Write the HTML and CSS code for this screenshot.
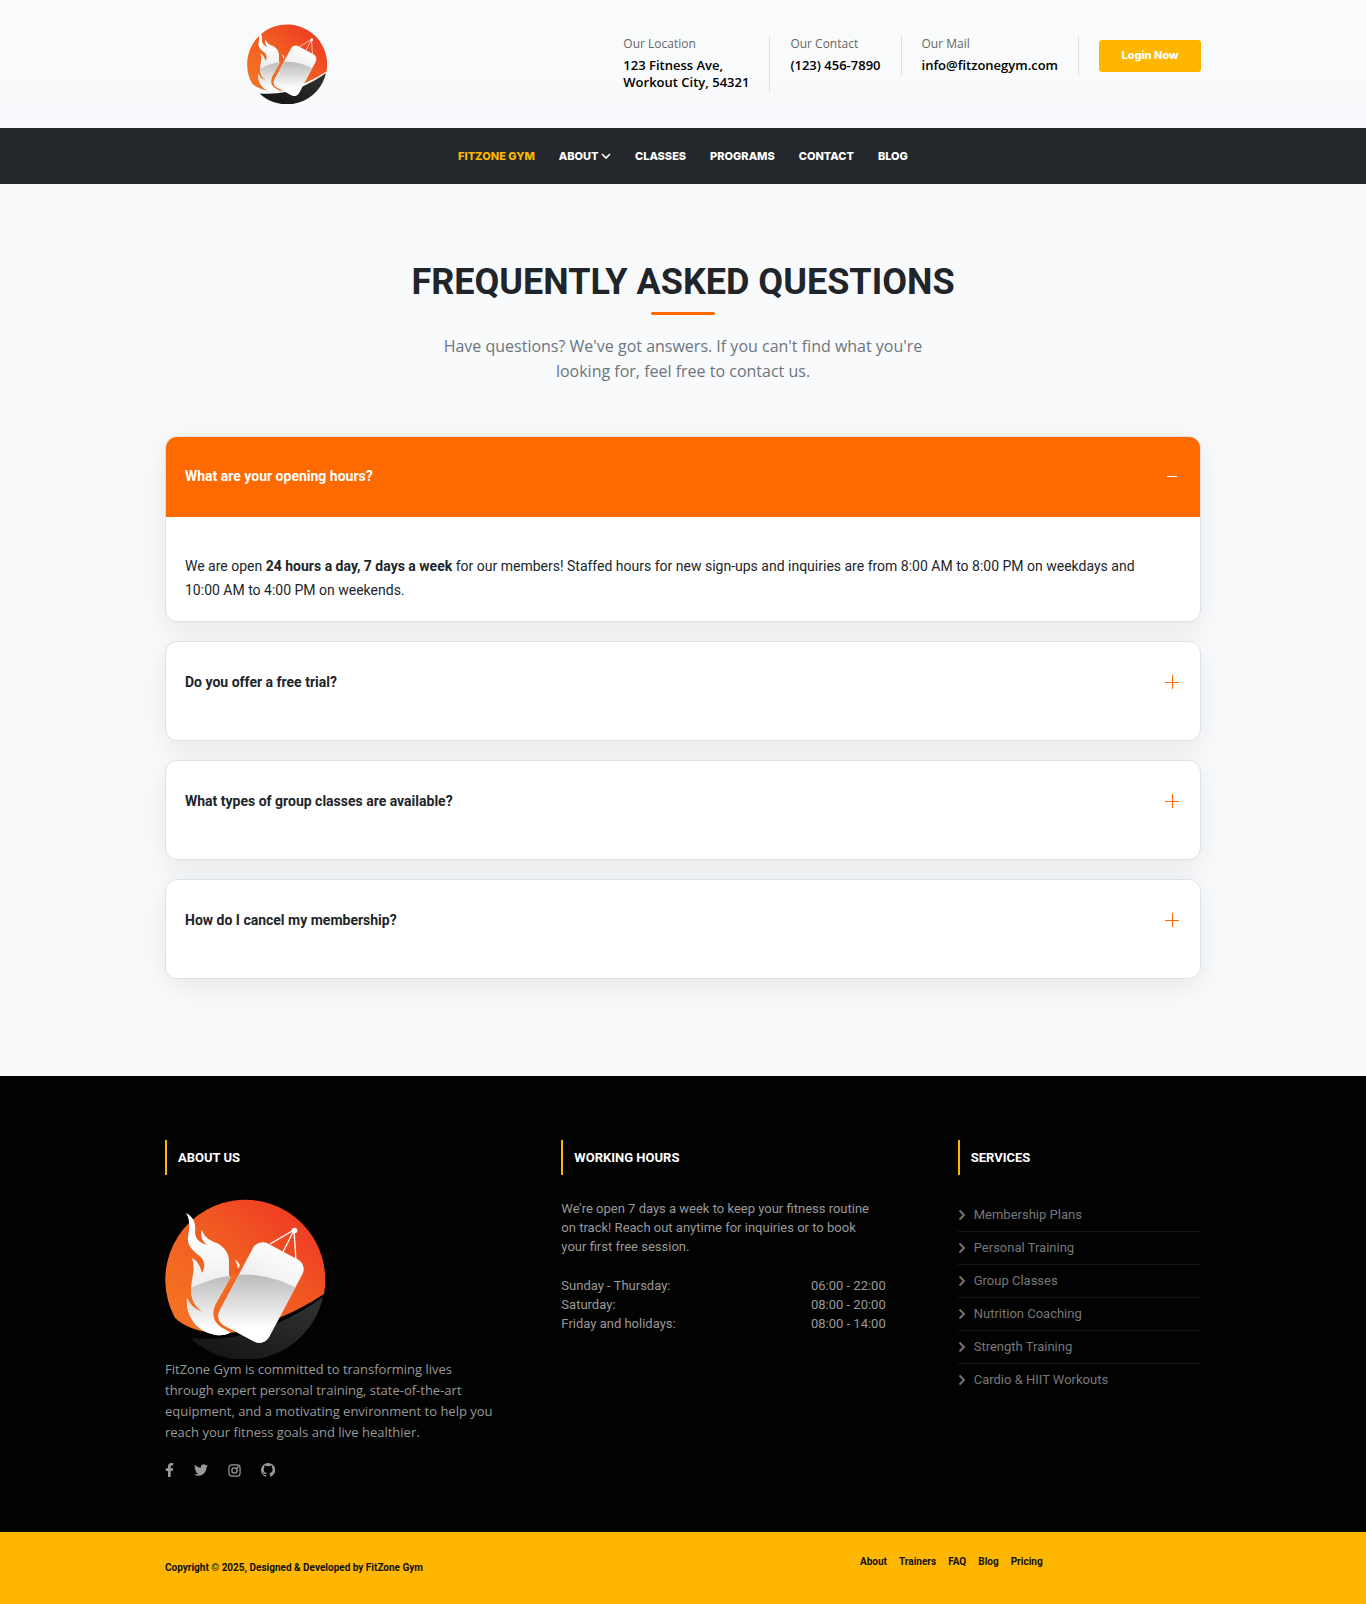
FILE: index.html
```html
<!DOCTYPE html>
<html lang="en">
<head>
<meta charset="utf-8">
<meta name="viewport" content="width=device-width, initial-scale=1">
<title>FitZone Gym - FAQ</title>
<link rel="stylesheet" href="styles.css">
</head>
<body>
<svg class="sprite" aria-hidden="true">
  <defs>
    <linearGradient id="g-orange" x1="0.1" y1="0.8" x2="0.8" y2="0.1">
      <stop offset="0" stop-color="#f47022"/><stop offset="0.55" stop-color="#f15a22"/><stop offset="1" stop-color="#ef3d24"/>
    </linearGradient>
    <linearGradient id="g-dark" x1="0" y1="1" x2="1" y2="0">
      <stop offset="0" stop-color="#121212"/><stop offset="1" stop-color="#333333"/>
    </linearGradient>
    <linearGradient id="g-white" gradientUnits="userSpaceOnUse" x1="0" y1="40" x2="0" y2="90">
      <stop offset="0" stop-color="#ffffff"/><stop offset="1" stop-color="#ececec"/>
    </linearGradient>
    <linearGradient id="g-grey" gradientUnits="userSpaceOnUse" x1="0" y1="74" x2="0" y2="130">
      <stop offset="0" stop-color="#b9b9b9"/><stop offset="1" stop-color="#ffffff"/>
    </linearGradient>
    <path id="flame" d="M21 14C29 18 31 25 30 33C30 39 34 44 42 46C37 42 35 37 37 31C39 38 45 42 52 44C59 48 64 54 64 62L64 76Q65 79 68 78L53 105Q47 119 57 127L66 133Q60 137 51 136C39 134 31 128 26 119Q21 110 22 99C26 107 31 111 38 113C30 108 26 100 26 91C26 80 31 71 27 59C33 62 35 67 37 74C41 67 40 60 32 55C26 50 22 45 23 38C24 30 26 22 21 14Z"/>
    <rect id="bag" x="68" y="47" width="56" height="93" rx="11" transform="rotate(28 96 93.5)"/>
    <clipPath id="c-flame"><use href="#flame"/></clipPath>
    <clipPath id="c-bag"><use href="#bag"/></clipPath>
  </defs>
  <symbol id="logo" viewBox="0 0 160 160">
    <path fill="url(#g-orange)" d="M10 119A80 80 0 1 1 159 95Q138 109 114 119Q80 136 50 134Q24 132 10 119Z"/>
    <path fill="url(#g-dark)" d="M158 98A80 80 0 0 1 25 139Q72 143 113 124Q139 112 158 98Z"/>
    <use href="#flame" fill="url(#g-white)"/>
    <path d="M70 60Q73 63 75 66L73 70Q72 64 70 60Z" fill="#fff"/>
    <path clip-path="url(#c-flame)" fill="url(#g-grey)" d="M20 92Q83 58 140 94V160H20Z"/>
    <path d="M70 75L52 107Q47 120 58 127L67 132" fill="none" stroke="#f36a22" stroke-width="4"/>
    <path d="M105 45L129 31L118 53M129 31L131 62" fill="none" stroke="#fff" stroke-width="1.3"/>
    <circle cx="129.500" cy="31.500" r="2.800" fill="#fff"/>
    <use href="#bag" fill="url(#g-white)"/>
    <path clip-path="url(#c-bag)" fill="url(#g-grey)" d="M20 92Q83 58 140 94V160H20Z"/>
  </symbol>
  <symbol id="chev-right" viewBox="0 0 8 12"><path d="M1.500 1.500L6 6L1.500 10.500" fill="none" stroke="currentColor" stroke-width="1.800"/></symbol>
</svg>

<header class="topbar">
  <div class="container topbar-inner">
    <a class="brand" href="#" aria-label="FitZone Gym"><svg class="brand-logo"><use href="#logo"/></svg></a>
    <div class="contacts">
      <div class="contact"><span>Our Location</span><strong>123 Fitness Ave,<br>Workout City, 54321</strong></div>
      <div class="contact"><span>Our Contact</span><strong>(123) 456-7890</strong></div>
      <div class="contact"><span>Our Mail</span><strong>info@fitzonegym.com</strong></div>
      <button class="login" type="button">Login Now</button>
    </div>
  </div>
</header>

<nav class="nav" aria-label="Main">
  <a class="active" href="#">FITZONE GYM</a>
  <a href="#">ABOUT <svg class="caret" viewBox="0 0 10 8"><path d="M1 2L5 6L9 2" fill="none" stroke="currentColor" stroke-width="1.600"/></svg></a>
  <a href="#">CLASSES</a>
  <a href="#">PROGRAMS</a>
  <a href="#">CONTACT</a>
  <a href="#">BLOG</a>
</nav>

<main class="faq">
  <div class="container">
    <h1>FREQUENTLY ASKED QUESTIONS</h1>
    <div class="rule"></div>
    <p class="lead">Have questions? We've got answers. If you can't find what you're looking for, feel free to contact us.</p>
    <div class="accordion">
      <section class="card open">
        <h2><button type="button" aria-expanded="true">What are your opening hours?<svg class="sign" viewBox="0 0 16 16"><path d="M3 8.500H13" stroke="currentColor"/></svg></button></h2>
        <p class="answer">We are open <strong>24 hours a day, 7 days a week</strong> for our members! Staffed hours for new sign-ups and inquiries are from 8:00 AM to 8:00 PM on weekdays and 10:00 AM to 4:00 PM on weekends.</p>
      </section>
      <section class="card">
        <h2><button type="button" aria-expanded="false">Do you offer a free trial?<svg class="sign" viewBox="0 0 16 16"><path d="M1 8.500H15M8.500 1V15" stroke="currentColor"/></svg></button></h2>
      </section>
      <section class="card">
        <h2><button type="button" aria-expanded="false">What types of group classes are available?<svg class="sign" viewBox="0 0 16 16"><path d="M1 8.500H15M8.500 1V15" stroke="currentColor"/></svg></button></h2>
      </section>
      <section class="card">
        <h2><button type="button" aria-expanded="false">How do I cancel my membership?<svg class="sign" viewBox="0 0 16 16"><path d="M1 8.500H15M8.500 1V15" stroke="currentColor"/></svg></button></h2>
      </section>
    </div>
  </div>
</main>

<footer>
  <div class="footer-main">
    <div class="container columns">
      <section>
        <h3>ABOUT US</h3>
        <svg class="footer-logo" role="img" aria-label="FitZone Gym"><use href="#logo"/></svg>
        <p class="about">FitZone Gym is committed to transforming lives through expert personal training, state-of-the-art equipment, and a motivating environment to help you reach your fitness goals and live healthier.</p>
        <div class="social">
          <a href="#" aria-label="Facebook"><svg width="9" height="14" viewBox="0 0 320 512"><path fill="currentColor" d="M279 288l14-93h-89v-60c0-25 12-50 52-50h41V6s-37-6-72-6c-73 0-121 44-121 125v70H23v93h81v224h100V288z"/></svg></a>
          <a href="#" aria-label="Twitter"><svg width="14" height="14" viewBox="0 0 512 512"><path fill="currentColor" d="M459 152c0 4 0 9 0 14 0 138-105 298-298 298-59 0-114-17-161-47 8 1 16 1 25 1 49 0 94-16 130-45-46-1-85-31-98-73 7 1 13 2 20 2 9 0 19-1 28-4-48-10-84-52-84-103v-1c14 8 30 13 47 13-28-19-46-51-46-87 0-19 5-37 14-53 52 64 129 105 216 110-2-8-3-16-3-24 0-58 47-105 105-105 30 0 57 13 77 33 24-5 46-13 66-25-8 24-24 45-46 58 21-2 42-8 60-16-14 21-32 39-52 54z"/></svg></a>
          <a href="#" aria-label="Instagram"><svg width="13" height="13" viewBox="0 0 14 14" fill="none" stroke="currentColor" stroke-width="1.300"><rect x="1" y="1" width="12" height="12" rx="3"/><circle cx="7" cy="7" r="2.800"/><circle cx="10.400" cy="3.600" r="0.500"/></svg></a>
          <a href="#" aria-label="GitHub"><svg width="14" height="14" viewBox="0 0 16 16"><path fill="currentColor" d="M8 0a8 8 0 0 0-2.500 15.600c.4.100.5-.2.500-.4v-1.600c-2.100.5-2.700-.5-2.900-1-.1-.3-.5-1-.9-1.200-.300-.2-.8-.6 0-.6.7 0 1.200.6 1.400.9.800 1.300 2.100 1 2.600.7.100-.6.300-1 .6-1.200C4.900 11 3.100 10.300 3.100 7.300c0-.9.300-1.600.8-2.200-.1-.2-.4-1 .1-2.100 0 0 .7-.2 2.200.8a7.600 7.600 0 0 1 4 0c1.500-1 2.200-.8 2.200-.8.400 1.100.2 1.900.1 2.100.5.600.8 1.300.8 2.200 0 3.100-1.900 3.700-3.600 3.900.3.200.5.700.5 1.500v2.500c0 .200.100.500.500.400A8 8 0 0 0 8 0z"/></svg></a>
        </div>
      </section>
      <section>
        <h3>WORKING HOURS</h3>
        <p class="hours-text">We’re open 7 days a week to keep your fitness routine on track! Reach out anytime for inquiries or to book your first free session.</p>
        <table class="hours">
          <tr><th scope="row">Sunday - Thursday:</th><td>06:00 - 22:00</td></tr>
          <tr><th scope="row">Saturday:</th><td>08:00 - 20:00</td></tr>
          <tr><th scope="row">Friday and holidays:</th><td>08:00 - 14:00</td></tr>
        </table>
      </section>
      <section>
        <h3>SERVICES</h3>
        <ul class="services">
          <li><a href="#"><svg class="chev"><use href="#chev-right"/></svg>Membership Plans</a></li>
          <li><a href="#"><svg class="chev"><use href="#chev-right"/></svg>Personal Training</a></li>
          <li><a href="#"><svg class="chev"><use href="#chev-right"/></svg>Group Classes</a></li>
          <li><a href="#"><svg class="chev"><use href="#chev-right"/></svg>Nutrition Coaching</a></li>
          <li><a href="#"><svg class="chev"><use href="#chev-right"/></svg>Strength Training</a></li>
          <li><a href="#"><svg class="chev"><use href="#chev-right"/></svg>Cardio &amp; HIIT Workouts</a></li>
        </ul>
      </section>
    </div>
  </div>
  <div class="footer-bottom">
    <div class="container bottom-inner">
      <p>Copyright © 2025, Designed &amp; Developed by FitZone Gym</p>
      <div class="bottom-links"><a href="#">About</a><a href="#">Trainers</a><a href="#">FAQ</a><a href="#">Blog</a><a href="#">Pricing</a></div>
    </div>
  </div>
</footer>
</body>
</html>
```

FILE: styles.css
```css
* { box-sizing: border-box; }
body { margin: 0; background: #f8fafc; color: #212529; font-family: Roboto, sans-serif; font-size: 14px; }
h1, h2, h3, p, ul { margin: 0; padding: 0; }
a { color: inherit; text-decoration: none; }
.sprite { position: absolute; width: 0; height: 0; }
.container { width: calc(100% - 32px); max-width: 1036px; margin: 0 auto; }

.topbar { background: linear-gradient(#fafcfb, #f8f9fc); }
.topbar-inner { display: flex; justify-content: space-between; align-items: flex-start; min-height: 128px; padding: 24px 0 24px 82px; }
.brand-logo { display: block; width: 80px; height: 80px; }
.contacts { display: flex; align-items: flex-start; gap: 20px; padding-top: 12px; font-family: "Open Sans", sans-serif; }
.contact { padding: 0 20px 1px 0; border-right: 1px solid #dddddd; }
.contact span { display: block; font-size: 12px; line-height: 16px; margin-bottom: 5px; color: #666666; }
.contact strong { display: block; font-size: 13px; line-height: 17px; font-weight: 600; color: #000000; }
.login { width: 102px; height: 32px; margin-top: 4px; padding-bottom: 3px; border: 0; border-radius: 3px; background: #ffb600; color: #ffffff; font: 800 11px Inter, sans-serif; }

.nav { display: flex; justify-content: center; align-items: center; gap: 24px; min-height: 56px; background: #23282c; color: #ffffff; font: 800 11px Inter, sans-serif; }
.nav .active { color: #ffb600; }
.caret { width: 10px; height: 8px; }

.faq { padding: 72px 0 97px; }
.faq h1 { font-size: 36px; line-height: 52px; font-weight: 700; text-align: center; }
.rule { width: 64px; height: 3px; margin: 4px auto 19px; border-radius: 2px; background: #ff6a00; }
.lead { max-width: 500px; margin: 0 auto 52px; font: 16px/25px "Open Sans", sans-serif; text-align: center; color: #6c757d; }
.accordion { display: grid; gap: 19px; }
.card { min-height: 100px; border: 1px solid #dee2e6; border-radius: 12px; overflow: hidden; background: #ffffff; box-shadow: 0 8px 30px rgba(0, 0, 0, 0.08); }
.card h2 { font-size: 14px; }
.card button { display: flex; justify-content: space-between; align-items: center; width: 100%; height: 80px; padding: 0 20px 0 19px; border: 0; background: transparent; color: #212529; font: 700 14px Roboto, sans-serif; text-align: left; }
.sign { width: 16px; height: 16px; color: #ff6a00; }
.card.open button { padding-bottom: 2px; background: #ff6a00; color: #ffffff; }
.open .sign { color: #ffffff; }
.answer { padding: 37px 48px 19px 19px; font-size: 14px; line-height: 24px; }

.footer-main { padding: 64px 0 55px; background: #020202; color: #999999; }
.columns { display: grid; grid-template-columns: 4fr 4fr 3fr; gap: 72px; }
.columns h3 { padding-left: 11px; margin-bottom: 24px; border-left: 2px solid #ffb600; color: #ffffff; font-size: 13px; line-height: 35px; }
.footer-logo { display: block; width: 160px; height: 160px; }
.about { margin-right: -8px; font: 13px/21px "Open Sans", sans-serif; }
.social { display: flex; align-items: center; gap: 20px; margin-top: 20px; }
.social svg { display: block; }
.hours-text, .hours { font-size: 13px; line-height: 19px; }
.hours-text { padding-right: 12px; }
.hours { width: 100%; margin-top: 20px; border-collapse: collapse; }
.hours th, .hours td { padding: 0; font-weight: 400; text-align: left; }
.hours td { text-align: right; }
.services { list-style: none; color: #777777; font-size: 13px; line-height: 32px; }
.services li + li { border-top: 1px solid #151515; }
.services a { display: flex; align-items: center; gap: 8px; }
.chev { width: 8px; height: 12px; }

.footer-bottom { background: #ffb600; color: #111111; font-size: 10px; font-weight: 700; }
.bottom-inner { display: grid; grid-template-columns: 695fr 341fr; min-height: 72px; padding-top: 22px; line-height: 16px; }
.bottom-inner p { padding-top: 6px; }
.bottom-links { display: flex; gap: 12px; }

@media (max-width: 900px) {
  .topbar-inner { flex-direction: column; padding-left: 0; }
  .contacts { flex-wrap: wrap; }
  .nav { flex-wrap: wrap; }
  .columns, .bottom-inner { grid-template-columns: 1fr; }
  .about { margin-right: 0; }
}
```
